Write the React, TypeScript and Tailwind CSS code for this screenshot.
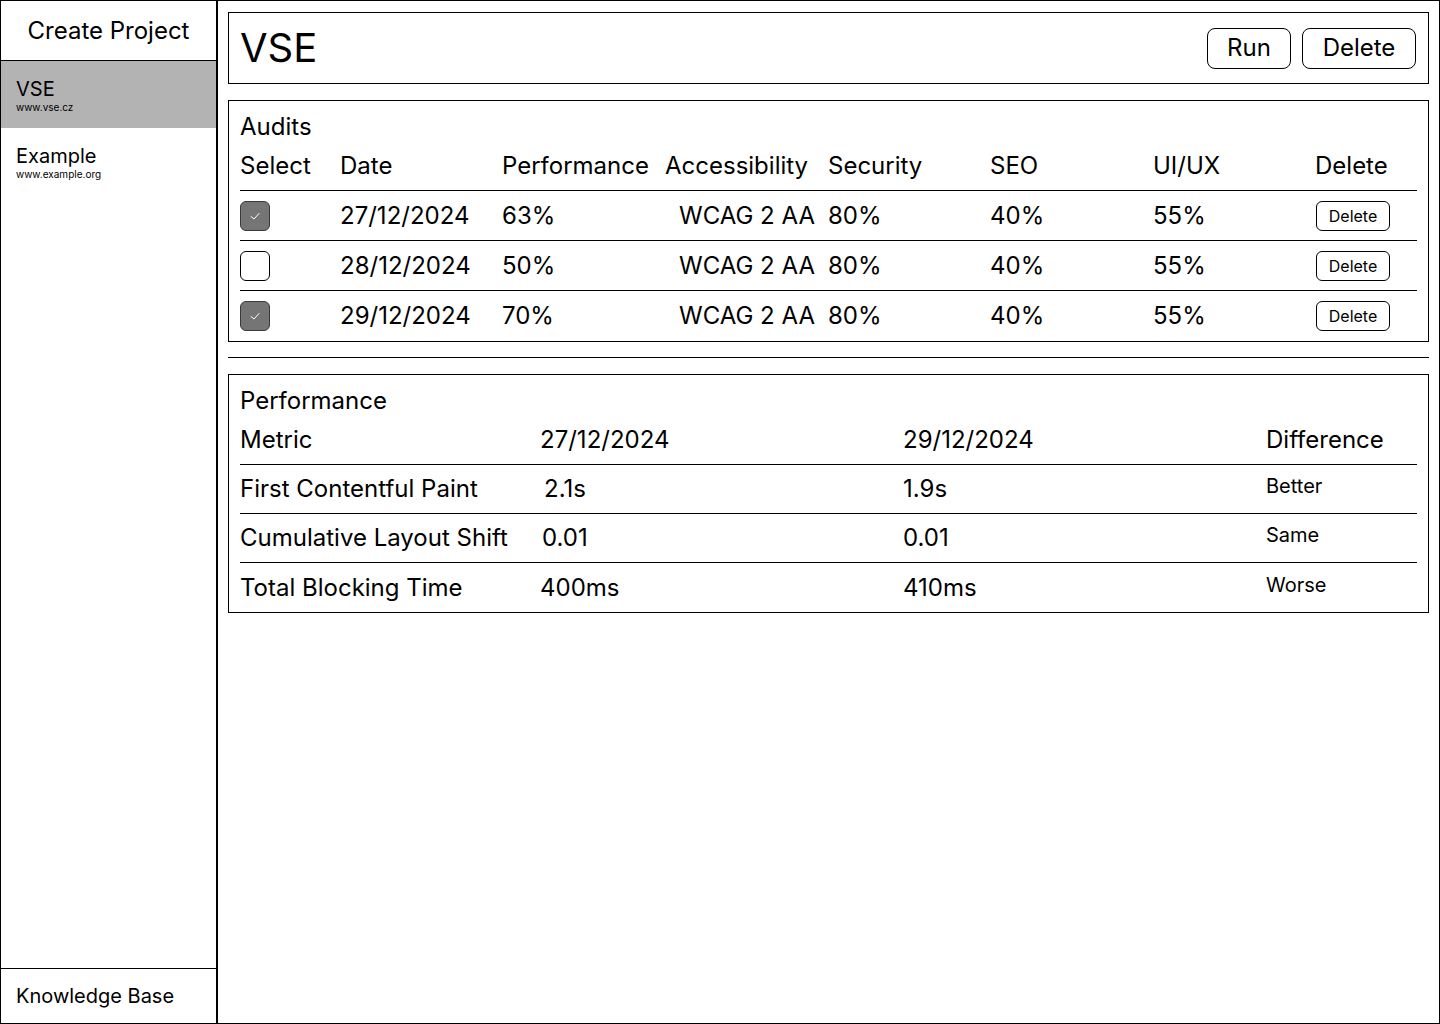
import React from 'react'

const audits = [
  { checked: true, date: '27/12/2024', perf: '63%' },
  { checked: false, date: '28/12/2024', perf: '50%' },
  { checked: true, date: '29/12/2024', perf: '70%' },
]

const metrics = [
  { name: 'First Contentful Paint', a: '2.1s', aPad: 'pl-1', b: '1.9s', diff: 'Better' },
  { name: 'Cumulative Layout Shift', a: '0.01', aPad: 'pl-0.5', b: '0.01', diff: 'Same' },
  { name: 'Total Blocking Time', a: '400ms', aPad: '', b: '410ms', diff: 'Worse' },
]

const auditCols = 'grid grid-cols-[100px_162px_163px_163px_162px_163px_162px_1fr] items-center'
const perfCols = 'grid grid-cols-[300px_363px_363px_1fr] items-center'

function Checkbox({ checked }: { checked: boolean }) {
  if (!checked) {
    return <div className="h-[30px] w-[30px] rounded-md border border-black bg-white" />
  }
  return (
    <div className="flex h-[30px] w-[30px] items-center justify-center rounded-md border border-[#3a3a3a] bg-[#757575]">
      <svg width="12" height="10" viewBox="0 0 12 10" fill="none">
        <polyline points="2,5.5 5,8 10,2.5" stroke="white" strokeWidth="1" strokeLinecap="round" strokeLinejoin="round" />
      </svg>
    </div>
  )
}

function Sidebar() {
  return (
    <aside className="flex w-[217px] shrink-0 flex-col border-r-2 border-black">
      <div className="flex h-[60px] items-center justify-center border-b border-black text-2xl">
        Create Project
      </div>
      <div className="h-[67px] bg-[#b3b3b3] px-[15px] pt-4">
        <div className="text-xl leading-6">VSE</div>
        <div className="text-[10px] leading-3">www.vse.cz</div>
      </div>
      <div className="h-[68px] px-[15px] pt-4">
        <div className="text-xl leading-6">Example</div>
        <div className="text-[10px] leading-3">www.example.org</div>
      </div>
      <div className="flex-1" />
      <div className="flex h-[55px] items-center border-t border-black px-[15px] text-xl">
        Knowledge Base
      </div>
    </aside>
  )
}

export default function App() {
  return (
    <div
      className="flex h-[1024px] w-[1440px] border border-black bg-white text-black"
      style={{ fontFamily: 'Inter, "Noto Sans", sans-serif' }}
    >
      <Sidebar />
      <main className="flex flex-1 flex-col px-[10px] pt-[11px]">
        <section className="flex h-[72px] items-center justify-between border border-black pl-[11px] pr-3">
          <h1 className="text-[40px] leading-none">VSE</h1>
          <div className="flex gap-[11px]">
            <button className="h-[41px] w-[84px] rounded-lg border border-black text-2xl">Run</button>
            <button className="h-[41px] w-[114px] rounded-lg border border-black text-2xl">Delete</button>
          </div>
        </section>

        <section className="mt-4 border border-black pl-[11px] pr-[11px]">
          <div className="pt-[11px] text-2xl leading-[29px]">Audits</div>
          <div className={`${auditCols} h-[50px] border-b border-black text-2xl`}>
            <div>Select</div>
            <div>Date</div>
            <div>Performance</div>
            <div>Accessibility</div>
            <div>Security</div>
            <div>SEO</div>
            <div>UI/UX</div>
            <div>Delete</div>
          </div>
          {audits.map((a, i) => (
            <div
              key={a.date}
              className={`${auditCols} h-[50px] text-2xl ${i < audits.length - 1 ? 'border-b border-black' : ''}`}
            >
              <Checkbox checked={a.checked} />
              <div>{a.date}</div>
              <div>{a.perf}</div>
              <div className="pl-[14px]">WCAG 2 AA</div>
              <div>80%</div>
              <div>40%</div>
              <div>55%</div>
              <div className="flex items-center pl-px">
                <button className="h-[30px] w-[74px] rounded-md border border-black text-base leading-none">Delete</button>
              </div>
            </div>
          ))}
        </section>

        <hr className="mt-[15px] border-t border-black" />

        <section className="mt-4 border border-black pl-[11px] pr-[11px]">
          <div className="pt-[11px] text-2xl leading-[29px]">Performance</div>
          <div className={`${perfCols} h-[50px] border-b border-black text-2xl`}>
            <div>Metric</div>
            <div>27/12/2024</div>
            <div>29/12/2024</div>
            <div>Difference</div>
          </div>
          {metrics.map((m, i) => (
            <div
              key={m.name}
              className={`${perfCols} h-[49px] text-2xl ${i < metrics.length - 1 ? 'border-b border-black' : ''}`}
            >
              <div>{m.name}</div>
              <div className={m.aPad}>{m.a}</div>
              <div>{m.b}</div>
              <div className="mb-[6px] text-xl">{m.diff}</div>
            </div>
          ))}
        </section>
      </main>
    </div>
  )
}
